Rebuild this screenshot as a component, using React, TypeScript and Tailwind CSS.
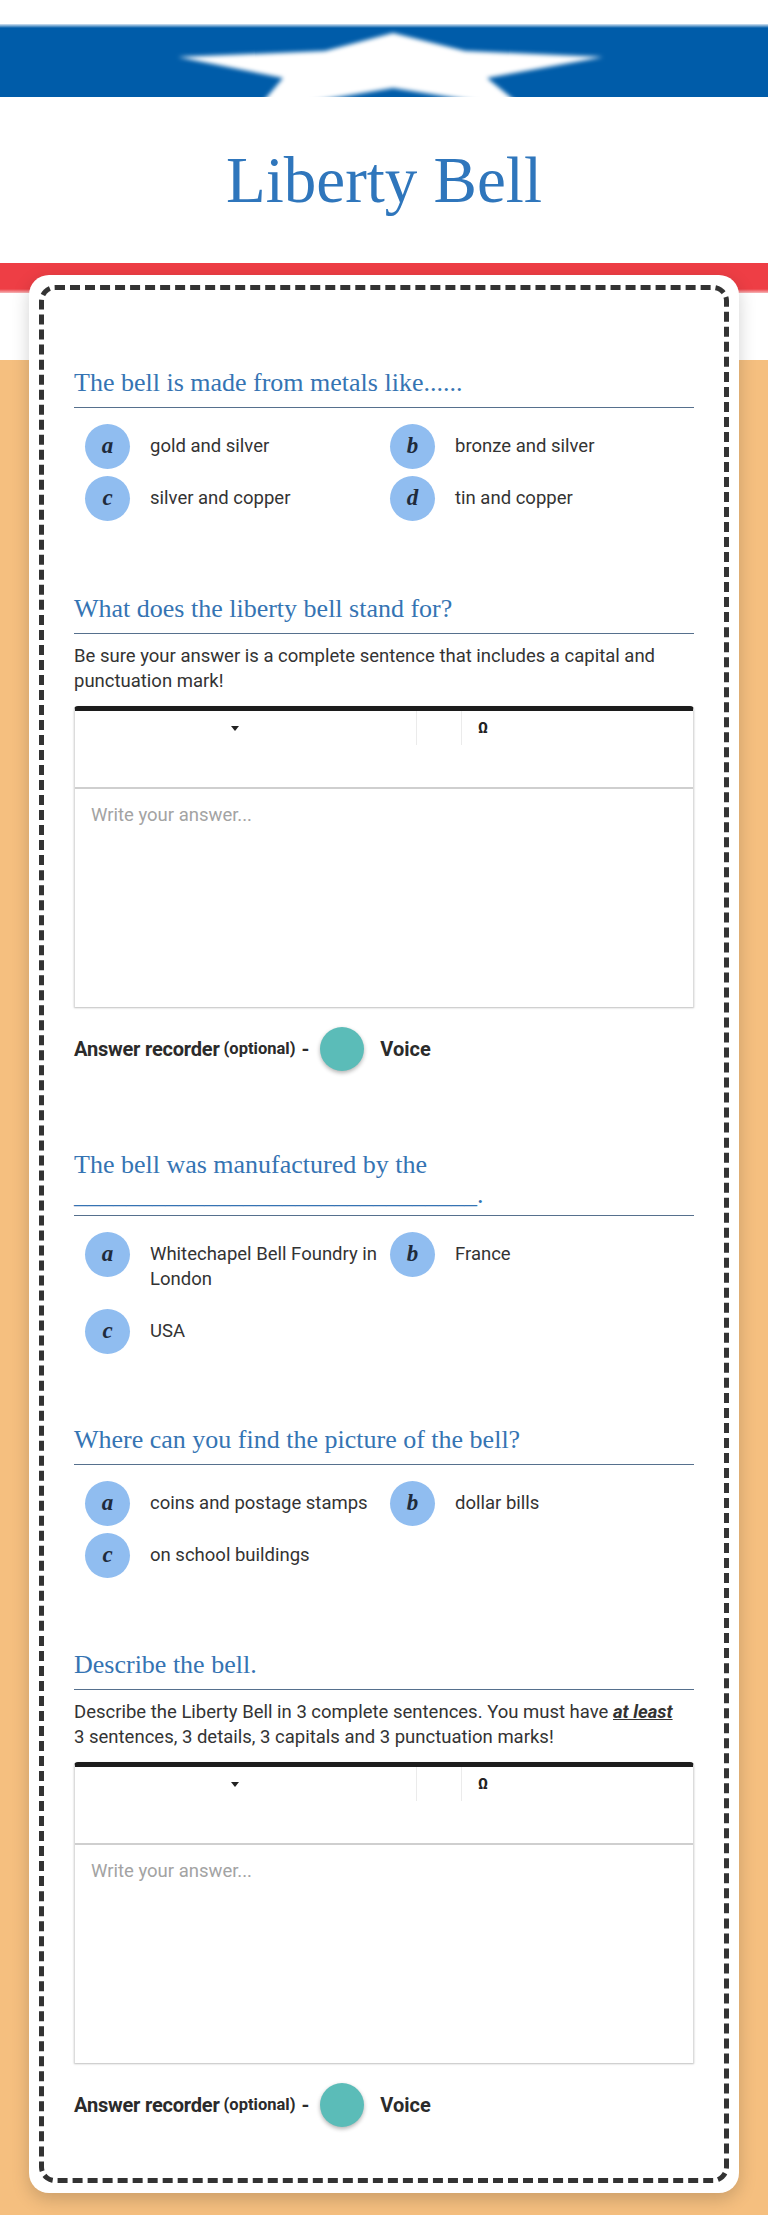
const serif = "font-['Liberation_Serif',serif]";

function Heading({ children, tight }: { children: React.ReactNode; tight?: boolean }) {
  return (
    <h2
      className={`${serif} text-[26px] leading-[30px] text-[#3574b3] border-b border-[#56708d] ${
        tight ? "pb-[5px]" : "pb-[9px]"
      }`}
    >
      {children}
    </h2>
  );
}

function Option({ letter, text }: { letter: string; text: React.ReactNode }) {
  return (
    <div className="flex items-start">
      <div
        className={`${serif} w-[45px] h-[45px] shrink-0 rounded-full bg-[#90bdf0] flex items-center justify-center italic font-semibold text-[23px] text-[#1f2b3b]`}
      >
        {letter}
      </div>
      <div className="ml-[20px] py-[10px] text-[18.5px] leading-[25px] text-[#333]">
        {text}
      </div>
    </div>
  );
}

function Options({ items }: { items: [string, React.ReactNode][] }) {
  return (
    <div className="grid grid-cols-[305px_305px] gap-y-[7px] ml-[11px] mt-[16px]">
      {items.map(([l, t]) => (
        <Option key={l} letter={l} text={t} />
      ))}
    </div>
  );
}

function Editor() {
  return (
    <div className="mt-[12px] rounded-t-[4px] border-t-[5px] border-t-[#1c1c1c] border-x border-x-[#dcdcdc] shadow-[0_1px_2px_rgba(0,0,0,0.25)]">
      <div className="h-[78px] border-b-2 border-b-[#cfcfcf]">
        <div className="flex h-[34px]">
          <div className="w-[341px] flex items-center">
            <span className="ml-[156px] w-0 h-0 border-x-[4px] border-x-transparent border-t-[5px] border-t-[#222]" />
          </div>
          <div className="w-[46px] border-x border-x-[#ebebeb]" />
          <div className="pl-[16px] flex items-center font-bold text-[15px] text-[#222]">Ω</div>
        </div>
      </div>
      <div className="h-[218px] px-[16px] pt-[14px] text-[18.5px] leading-[25px] text-[#a3a3a3]">
        Write your answer...
      </div>
    </div>
  );
}

function Recorder() {
  return (
    <div className="mt-[20px] flex items-center text-[#2b2b2b] font-bold">
      <span className="text-[20px] tracking-[-0.2px]">Answer recorder</span>
      <span className="text-[16.5px] ml-[4px]">(optional)</span>
      <span className="text-[20px] ml-[6px]">-</span>
      <div className="ml-[11px] w-[44px] h-[44px] rounded-full bg-[#5bbcb8] shadow-[0_2px_4px_rgba(0,0,0,0.3)]" />
      <span className="ml-[16px] text-[20px]">Voice</span>
    </div>
  );
}

export default function App() {
  return (
    <div className="w-full font-['Roboto',sans-serif] bg-[#f5bf7f]">
      <header className="bg-white">
        <div className="h-[24px] bg-white" />
        <div className="h-[73px] bg-[linear-gradient(to_bottom,#d4e4f3_0px,#005ca9_4px)]">
          <svg width="768" height="73" viewBox="0 0 768 73">
            <defs>
              <filter id="blur" x="-10%" y="-20%" width="120%" height="140%">
                <feGaussianBlur stdDeviation="2" />
              </filter>
            </defs>
            <polygon
              fill="#fff"
              filter="url(#blur)"
              points="393,9 465,27 603,33 487,54 519,80 493,80 393,64 297,80 261,80 283,54 178,33 325,27"
            />
          </svg>
        </div>
        <div className="h-[166px] flex items-center justify-center">
          <h1 className={`${serif} text-[65px] leading-[65px] text-[#2f76bc]`}>Liberty Bell</h1>
        </div>
        <div className="h-[30px] bg-[linear-gradient(to_bottom,#ee3e45_0px,#ee3e45_26px,#f6b5b7_30px)]" />
        <div className="h-[67px] bg-white" />
      </header>

      <main className="pb-[23px]">
        <div className="relative mt-[-85px] mx-[29px] bg-white rounded-[20px] p-[10px] shadow-[0_6px_18px_rgba(0,0,0,0.18)]">
          <div className="border-[5px] border-dashed border-[#333] rounded-[16px] px-[30px] pt-[78px] pb-[51px]">
            <section>
              <Heading>The bell is made from metals like......</Heading>
              <Options
                items={[
                  ["a", "gold and silver"],
                  ["b", "bronze and silver"],
                  ["c", "silver and copper"],
                  ["d", "tin and copper"],
                ]}
              />
            </section>

            <section className="mt-[73px]">
              <Heading>What does the liberty bell stand for?</Heading>
              <p className="mt-[10px] text-[18.5px] leading-[25px] text-[#333]">
                Be sure your answer is a complete sentence that includes a capital and punctuation
                mark!
              </p>
              <Editor />
              <Recorder />
            </section>

            <section className="mt-[79px]">
              <Heading tight>
                The bell was manufactured by the
                <br />
                _______________________________.
              </Heading>
              <Options
                items={[
                  ["a", "Whitechapel Bell Foundry in London"],
                  ["b", "France"],
                  ["c", "USA"],
                ]}
              />
            </section>

            <section className="mt-[71px]">
              <Heading>Where can you find the picture of the bell?</Heading>
              <Options
                items={[
                  ["a", "coins and postage stamps"],
                  ["b", "dollar bills"],
                  ["c", "on school buildings"],
                ]}
              />
            </section>

            <section className="mt-[72px]">
              <Heading>Describe the bell.</Heading>
              <p className="mt-[10px] text-[18.5px] leading-[25px] text-[#333]">
                <span className="whitespace-nowrap">
                  Describe the Liberty Bell in 3 complete sentences. You must have{" "}
                  <b className="italic underline">at least</b>
                </span>
                <br />3 sentences, 3 details, 3 capitals and 3 punctuation marks!
              </p>
              <Editor />
              <Recorder />
            </section>
          </div>
        </div>
      </main>
    </div>
  );
}
